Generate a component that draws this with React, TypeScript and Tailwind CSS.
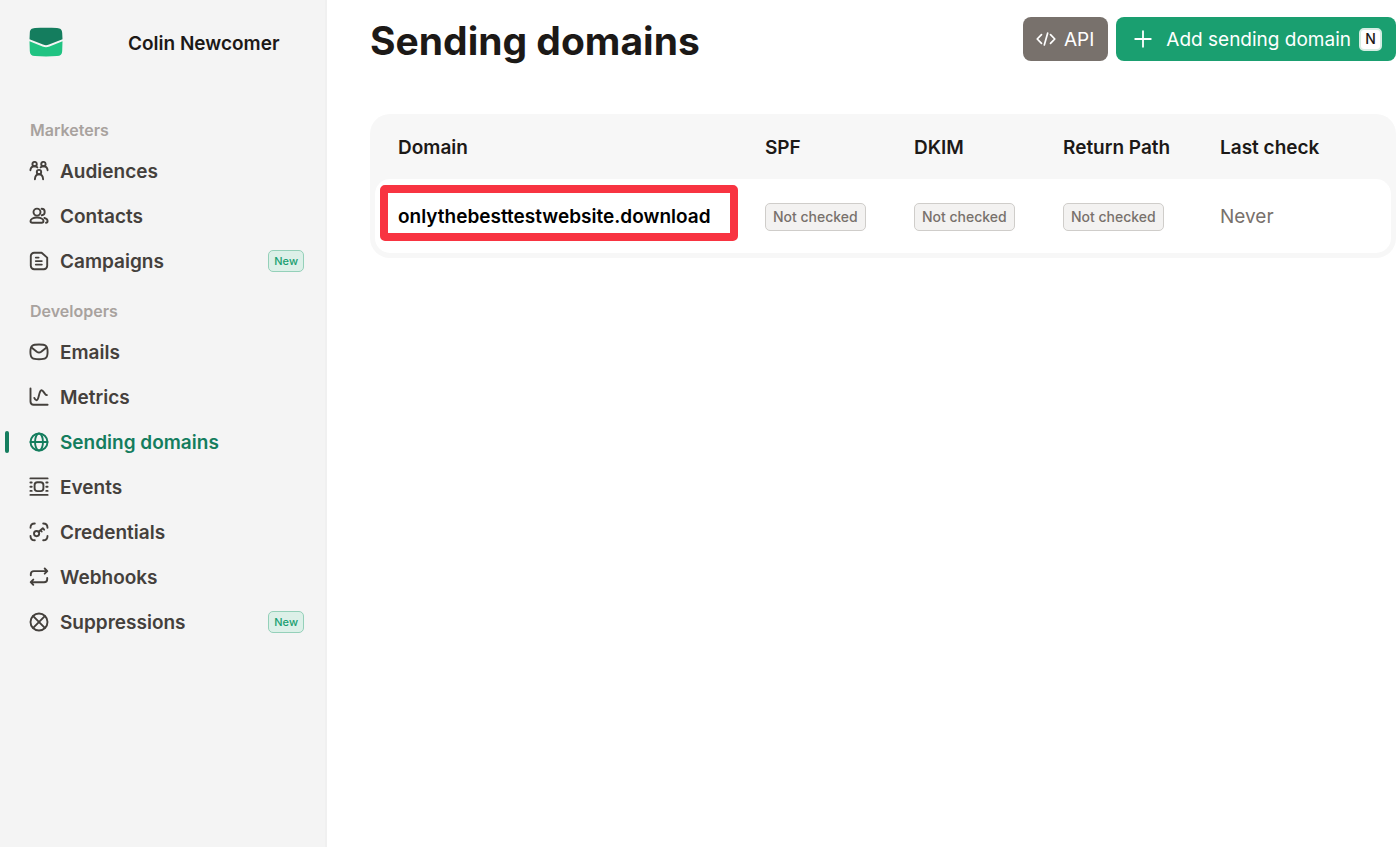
import React from "react";

type IconProps = { children: React.ReactNode };

const Icon: React.FC<IconProps> = ({ children }) => (
    <svg
        viewBox="0 0 20 20"
        className="size-5 shrink-0"
        fill="none"
        stroke="currentColor"
        strokeWidth="1.9"
        strokeLinecap="round"
        strokeLinejoin="round"
        aria-hidden="true"
    >
        {children}
    </svg>
);

const AudiencesIcon = () => (
    <Icon>
        <circle cx="5.6" cy="3.1" r="2.2" />
        <circle cx="14.4" cy="3.1" r="2.2" />
        <circle cx="10" cy="11.1" r="2.2" />
        <path d="M1.400 9.200c.2-2.300 1.600-3.900 4.200-3.900 1.200 0 2.100.4 2.800 1.100M18.600 9.200c-.2-2.300-1.600-3.900-4.200-3.900-1.200 0-2.100.4-2.800 1.100M5.900 18.200c.2-3 1.600-4.900 4.100-4.900s3.900 1.900 4.100 4.900" />
    </Icon>
);

const ContactsIcon = () => (
    <Icon>
        <circle cx="8" cy="6.100" r="3.500" />
        <path d="M8 11.500c-3.500 0-6.500 1.500-6.500 3.600 0 1 .8 1.700 1.800 1.700h9.400c1 0 1.800-.7 1.800-1.700 0-2.100-3-3.600-6.500-3.600z" />
        <path d="M12.600 2.800c1.800 0 3.100 1.500 3.100 3.200 0 1.700-1.200 3.100-2.900 3.300M15.400 12c1.900.5 3.200 1.600 3.200 3.100 0 1-.7 1.700-1.600 1.700" />
    </Icon>
);

const CampaignsIcon = () => (
    <Icon>
        <path d="M5.200 1.800h7.400l5.600 4.800v8.200a3.400 3.400 0 0 1-3.400 3.400H5.200a3.400 3.400 0 0 1-3.400-3.400V5.200a3.400 3.400 0 0 1 3.400-3.400z" />
        <path d="M6.800 6.600h2.800M6.800 10.100h6M6.800 13.600h6" />
    </Icon>
);

const EmailsIcon = () => (
    <Icon>
        <path d="M10 2.500c6.400 0 8.600.9 8.600 7.400s-2.200 7.400-8.600 7.400S1.400 16.400 1.400 9.900 3.600 2.500 10 2.500z" />
        <path d="M2.800 5.700l5 4c1.400 1 3 1 4.400 0l5-4" />
    </Icon>
);

const MetricsIcon = () => (
    <Icon>
        <path d="M1.500 1.500v13c0 2.100 1 3.200 3.100 3.200h14" />
        <path d="M5.300 10.900c.8 1.900 1.600 2.600 2.500 2.300 2.300-.8 2-9.500 4.700-9.900 1.500-.2 2.300 2.300 3.700 3.800.5.600 1.100.9 1.700 1" />
    </Icon>
);

const GlobeIcon = () => (
    <Icon>
        <circle cx="10" cy="10" r="8.500" />
        <ellipse cx="10" cy="10" rx="4" ry="8.500" />
        <path d="M1.500 10h17" />
    </Icon>
);

const EventsIcon = () => (
    <Icon>
        <path d="M1.400 1.400h17.200M1.400 17.900h17.200" />
        <path d="M1.400 5.500h1.300M1.400 9.700h1.300M1.400 13.900h1.300M17.300 5.500h1.300M17.300 9.700h1.300M17.300 13.900h1.300" />
        <rect x="5.600" y="5.300" width="8.800" height="8.800" rx="2.800" />
    </Icon>
);

const CredentialsIcon = () => (
    <Icon>
        <path d="M1.500 5.800c0-2.900 1.400-4.300 4.300-4.300M14.200 1.500c2.900 0 4.300 1.400 4.300 4.300M1.500 13.900c0 2.900 1.400 4.300 4.300 4.300M14.200 18.200c2.900 0 4.300-1.400 4.300-4.300" />
        <circle cx="7.600" cy="11.600" r="2.600" />
        <path d="M9.600 9.700l4.200-3.500 1.300 1.500M11.600 8.200l1.100 1.300" />
    </Icon>
);

const WebhooksIcon = () => (
    <Icon>
        <path d="M1.800 8.300V7.100c0-2 1.100-3 3.100-3h13M15.700 1.500l2.600 2.600-2.600 2.600" />
        <path d="M18.200 11v1.200c0 2-1.100 3-3.100 3h-13M4.300 12.600l-2.600 2.600 2.600 2.600" />
    </Icon>
);

const SuppressionsIcon = () => (
    <Icon>
        <circle cx="10" cy="10" r="8.500" />
        <path d="M4.200 4.200l11.600 11.600M15.800 4.200L4.200 15.800" />
    </Icon>
);

const Logo = () => (
    <svg viewBox="0 0 34 30" className="h-[30px] w-[34px]" aria-hidden="true">
        <path
            fill="#147d5e"
            d="M6 1c7-.5 15-.5 22 0 3.500.2 5 1.600 5.200 5l.3 6.200L20 17.600c-2.200.9-3.800.9-6 0L.5 12.200.8 6C1 2.600 2.500 1.200 6 1z"
        />
        <path
            fill="#20c382"
            d="M.5 14.200l13 5.200c2.600 1 4.400 1 7 0l13-5.200-.3 9.800c-.1 3.300-1.700 4.800-5.200 5.100-7 .6-15 .6-22 0C2.500 28.800.9 27.300.8 24z"
        />
    </svg>
);

type NavEntry = {
    label: string;
    icon: React.FC;
    isNew?: boolean;
    active?: boolean;
};

const sections: { title: string; items: NavEntry[] }[] = [
    {
        title: "Marketers",
        items: [
            { label: "Audiences", icon: AudiencesIcon },
            { label: "Contacts", icon: ContactsIcon },
            { label: "Campaigns", icon: CampaignsIcon, isNew: true },
        ],
    },
    {
        title: "Developers",
        items: [
            { label: "Emails", icon: EmailsIcon },
            { label: "Metrics", icon: MetricsIcon },
            { label: "Sending domains", icon: GlobeIcon, active: true },
            { label: "Events", icon: EventsIcon },
            { label: "Credentials", icon: CredentialsIcon },
            { label: "Webhooks", icon: WebhooksIcon },
            { label: "Suppressions", icon: SuppressionsIcon, isNew: true },
        ],
    },
];

const NavItem: React.FC<{ item: NavEntry }> = ({ item }) => (
    <li>
        <a
            href="#"
            aria-current={item.active ? "page" : undefined}
            className={`flex h-[45px] items-center pr-[21px] pl-[5px] text-[19px] leading-7 font-semibold ${
                item.active ? "text-[#147d5e]" : "text-[#44403c]"
            }`}
        >
            <span
                className={`mr-5 h-[22px] w-1 rounded-full ${
                    item.active ? "bg-[#147d5e]" : "bg-transparent"
                }`}
            />
            <item.icon />
            <span className="ml-[11px] flex-1 pt-[3px]">{item.label}</span>
            {item.isNew && (
                <span className="flex h-[22px] items-center rounded-[5px] border border-[#94d0b9] bg-[#dcf0e8] px-[5px] text-[11px] font-medium text-[#1a9f70]">
                    New
                </span>
            )}
        </a>
    </li>
);

const Sidebar = () => (
    <aside className="w-[327px] shrink-0 border-r-2 border-[#f0f0f0] bg-[#f4f4f4]">
        {/* Account */}
        <div className="flex h-[84px] items-center pl-[29px]">
            <Logo />
            <span className="ml-[65px] pt-[3px] text-[19px] leading-7 font-semibold text-[#1c1917]">
                Colin Newcomer
            </span>
        </div>

        {/* Navigation */}
        <nav className="pt-7">
            {sections.map((section) => (
                <div key={section.title} className="pb-2.5">
                    <h2 className="flex h-9 items-center pl-[30px] text-base font-semibold text-[#a8a29e]">
                        {section.title}
                    </h2>
                    <ul>
                        {section.items.map((item) => (
                            <NavItem key={item.label} item={item} />
                        ))}
                    </ul>
                </div>
            ))}
        </nav>
    </aside>
);

const StatusBadge = () => (
    <span className="flex h-7 w-fit items-center rounded-[5px] border border-[#cfcdca] bg-[#f3f2f1] px-[7px] text-sm font-medium text-[#78716c]">
        Not checked
    </span>
);

const DomainsTable = () => (
    <div className="rounded-[20px] bg-[#f7f7f7] px-[5px] pb-[5px]">
        <table className="w-full table-fixed border-separate border-spacing-0 text-left text-[19px] leading-7">
            <thead>
                <tr className="h-[65px] text-[#1c1917]">
                    <th className="pt-[3px] pl-[23px] font-semibold">Domain</th>
                    <th className="w-[149px] pt-[3px] pl-[23px] font-semibold">SPF</th>
                    <th className="w-[149px] pt-[3px] pl-[23px] font-semibold">DKIM</th>
                    <th className="w-[157px] pt-[3px] pl-[23px] font-semibold">Return Path</th>
                    <th className="w-[194px] pt-[3px] pl-[23px] font-semibold">Last check</th>
                </tr>
            </thead>
            <tbody>
                <tr className="h-[74px]">
                    <td className="rounded-l-[15px] bg-white pt-[6px] pr-1 pl-[5px] align-top">
                        <a
                            href="#"
                            className="flex h-14 items-center rounded-[5px] border-8 border-[#f83441] pt-2 pl-[10px] font-semibold text-black"
                        >
                            onlythebesttestwebsite.download
                        </a>
                    </td>
                    <td className="bg-white pt-0.5 pl-[23px]"><StatusBadge /></td>
                    <td className="bg-white pt-0.5 pl-[23px]"><StatusBadge /></td>
                    <td className="bg-white pt-0.5 pl-[23px]"><StatusBadge /></td>
                    <td className="rounded-r-[15px] bg-white pt-0.5 pl-[23px] text-[#78716c]">Never</td>
                </tr>
            </tbody>
        </table>
    </div>
);

const App: React.FC = () => {
    return (
        <div className="flex min-h-screen bg-white font-['Inter',sans-serif]">
            <Sidebar />

            <main className="min-w-0 flex-1 pr-1 pl-[43px]">
                <header className="flex h-[114px] items-start justify-between pt-[17px]">
                    <h1 className="text-[39px] leading-[48px] font-bold text-[#1c1917]">
                        Sending domains
                    </h1>
                    <div className="flex gap-2 text-[19px] leading-7 text-white">
                        <button type="button" className="flex h-11 items-center rounded-lg bg-[#78716c] pr-3.5 pl-[13px]">
                            <svg
                                viewBox="0 0 20 20"
                                className="mr-2 size-5"
                                fill="none"
                                stroke="currentColor"
                                strokeWidth="1.700"
                                strokeLinecap="round"
                                strokeLinejoin="round"
                                aria-hidden="true"
                            >
                                <path d="M5.500 5.600L1.200 10l4.300 4.400M14.500 5.600l4.300 4.400-4.300 4.400M11.700 4L8.300 16" />
                            </svg>
                            <span className="pt-0.5">API</span>
                        </button>
                        <button type="button" className="flex h-11 items-center rounded-lg bg-[#1a9f70] pr-3.5 pl-[18px]">
                            <svg
                                viewBox="0 0 18 18"
                                className="mr-3.5 size-[18px]"
                                stroke="currentColor"
                                strokeWidth="1.800"
                                strokeLinecap="round"
                                aria-hidden="true"
                            >
                                <path d="M9 1.200v15.600M1.200 9h15.600" />
                            </svg>
                            <span className="pt-0.5">Add sending domain</span>
                            <kbd className="ml-2 flex size-[23px] items-center justify-center rounded-[5px] border-2 border-[#d5ede3] bg-white font-['Inter',sans-serif] text-sm font-medium text-[#1c1917]">
                                N
                            </kbd>
                        </button>
                    </div>
                </header>

                <DomainsTable />
            </main>
        </div>
    );
};

export default App;
